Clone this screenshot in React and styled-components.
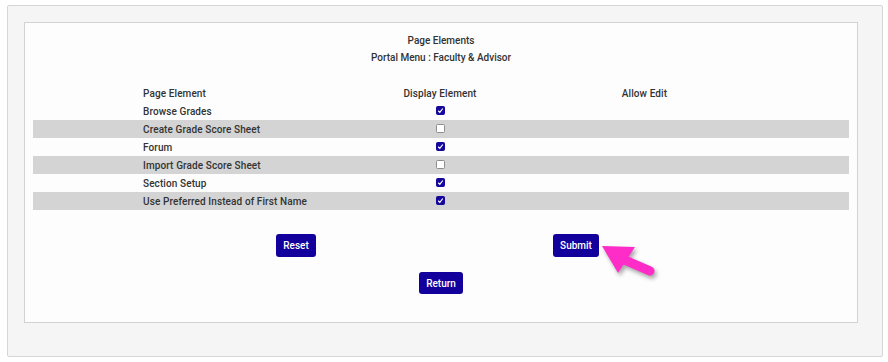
import React from "react";
import styled, { createGlobalStyle } from "styled-components";

const GlobalStyle = createGlobalStyle`
  body {
    margin: 0;
    background: #ffffff;
    font-family: Roboto, "Liberation Sans", Arial, sans-serif;
  }
`;

const OuterPanel = styled.div`
  position: relative;
  box-sizing: border-box;
  width: 876px;
  height: 352px;
  margin: 5px 0 0 7px;
  padding: 16px 24px 33px 16px;
  background: #f5f5f5;
  border: 1px solid #d6d6d6;
  border-radius: 2px;
`;

const InnerPanel = styled.div`
  box-sizing: border-box;
  height: 301px;
  padding: 9px 8px 0 8px;
  background: #fdfdfd;
  border: 1px solid #d2d2d2;
`;

const Heading = styled.div`
  text-align: center;
  font-size: 10px;
  font-weight: 500;
  line-height: 17px;
  color: #333;
`;

const Table = styled.div`
  margin-top: 18px;
  display: flex;
  flex-direction: column;
`;

const Row = styled.div`
  display: grid;
  grid-template-columns: 110px 195px 204px 205px 1fr;
  align-items: center;
  height: 18px;
  background: ${(p) => (p.$shaded ? "#d4d4d4" : "transparent")};
  font-size: 10px;
  font-weight: 500;
  color: #333;
  letter-spacing: 0.1px;
`;

const Cell = styled.div`
  grid-column: ${(p) => p.$col};
  white-space: nowrap;
  display: flex;
  justify-content: ${(p) => (p.$center ? "center" : "flex-start")};
  align-items: center;
`;

const Box = styled.span`
  box-sizing: border-box;
  display: inline-flex;
  align-items: center;
  justify-content: center;
  width: 9px;
  height: 9px;
  margin-top: -1px;
  border-radius: 1.5px;
  background: ${(p) => (p.$checked ? "#15079c" : "#ffffff")};
  border: 1px solid ${(p) => (p.$checked ? "#15079c" : "#8d8d8d")};
`;

const ButtonRow = styled.div`
  display: grid;
  grid-template-columns: 280px 280px;
  justify-content: center;
  justify-items: center;
  padding-right: 10px;
  margin-top: 24px;
`;

const ButtonCenter = styled.div`
  display: flex;
  justify-content: center;
  margin-top: 15px;
`;

const Button = styled.button`
  height: ${(p) => p.$h || 23}px;
  padding: 0 7px;
  border: none;
  border-radius: 3px;
  background: #13009c;
  color: #fff;
  font-family: Roboto, "Liberation Sans", Arial, sans-serif;
  font-size: 10px;
  font-weight: 500;
  cursor: pointer;
`;

const Arrow = styled.svg`
  position: absolute;
  left: 590px;
  top: 234px;
  filter: drop-shadow(2px 3px 2px rgba(0, 0, 0, 0.35));
`;

const Check = ({ checked }) => (
  <Box $checked={checked}>
    {checked && (
      <svg width="7" height="7" viewBox="0 0 7 7">
        <path d="M1.2 3.8 L2.8 5.3 L5.8 1.5" stroke="#fff" strokeWidth="1.2" fill="none" />
      </svg>
    )}
  </Box>
);

const items = [
  { name: "Browse Grades", checked: true },
  { name: "Create Grade Score Sheet", checked: false },
  { name: "Forum", checked: true },
  { name: "Import Grade Score Sheet", checked: false },
  { name: "Section Setup", checked: true },
  { name: "Use Preferred Instead of First Name", checked: true },
];

export default function App() {
  return (
    <>
      <GlobalStyle />
      <OuterPanel>
        <InnerPanel>
          <Heading>Page Elements</Heading>
          <Heading>Portal Menu : Faculty &amp; Advisor</Heading>
          <Table>
            <Row>
              <Cell $col={2}>Page Element</Cell>
              <Cell $col={3} $center>Display Element</Cell>
              <Cell $col={4} $center>Allow Edit</Cell>
            </Row>
            {items.map((item, i) => (
              <Row key={item.name} $shaded={i % 2 === 1}>
                <Cell $col={2}>{item.name}</Cell>
                <Cell $col={3} $center>
                  <Check checked={item.checked} />
                </Cell>
              </Row>
            ))}
          </Table>
          <ButtonRow>
            <Button>Reset</Button>
            <Button>Submit</Button>
          </ButtonRow>
          <ButtonCenter>
            <Button $h={22}>Return</Button>
          </ButtonCenter>
        </InnerPanel>
        <Arrow width="70" height="50" viewBox="0 0 70 50">
          <path d="M4 6 L37 7 L20 33 Z" fill="#ff2dc8" />
          <line x1="22" y1="18" x2="52" y2="31" stroke="#ff2dc8" strokeWidth="9" strokeLinecap="round" />
        </Arrow>
      </OuterPanel>
    </>
  );
}
